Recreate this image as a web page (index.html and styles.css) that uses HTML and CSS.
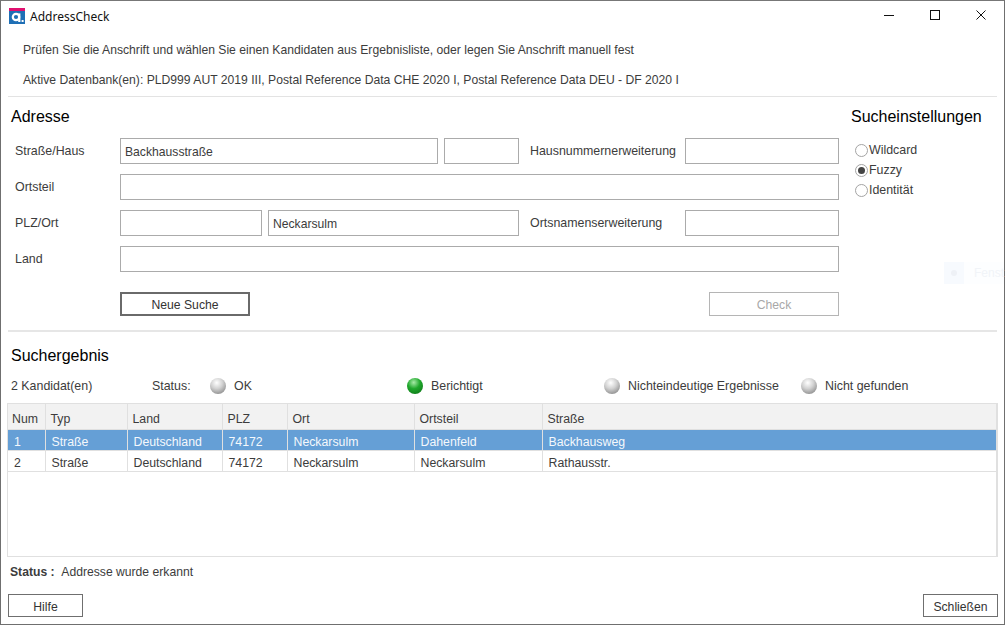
FILE: index.html
```html
<!DOCTYPE html>
<html lang="de">
<head>
  <meta charset="UTF-8">
  <title>AddressCheck</title>
  <link rel="stylesheet" href="styles.css">
</head>
<body>
  <div class="window">
    <header class="titlebar">
      <svg class="logo" width="16" height="16" viewBox="0 0 16 16">
        <rect width="16" height="16" fill="#1f6fb5"/>
        <rect width="16" height="3" fill="#e0106f"/>
        <circle cx="7" cy="9" r="3.2" fill="none" stroke="#fff" stroke-width="2.2"/>
        <rect x="9.2" y="5.4" width="2.2" height="8.6" fill="#fff"/>
        <rect x="12.6" y="12" width="2" height="2" fill="#fff"/>
      </svg>
      <span class="title">AddressCheck</span>
      <div class="window-controls">
        <svg width="10" height="10" viewBox="0 0 10 10"><path d="M0 5.5H10" stroke="#111" fill="none"/></svg>
        <svg width="10" height="10" viewBox="0 0 10 10"><rect x="0.5" y="0.5" width="9" height="9" stroke="#111" fill="none"/></svg>
        <svg width="10" height="10" viewBox="0 0 10 10"><path d="M0.5 0.5L9.5 9.5M9.5 0.5L0.5 9.5" stroke="#111" fill="none"/></svg>
      </div>
    </header>

    <div class="intro">
      <p>Prüfen Sie die Anschrift und wählen Sie einen Kandidaten aus Ergebnisliste, oder legen Sie Anschrift manuell fest</p>
      <p>Aktive Datenbank(en): PLD999 AUT 2019 III, Postal Reference Data CHE 2020 I, Postal Reference Data DEU - DF 2020 I</p>
    </div>

    <section class="search">
      <div class="address">
        <h2>Adresse</h2>
        <div class="form-grid">
          <label class="lbl">Straße/Haus</label>
          <div class="field span-street">Backhausstraße</div>
          <div class="field col-house"></div>
          <label class="lbl col-extlabel">Hausnummernerweiterung</label>
          <div class="field col-ext"></div>

          <label class="lbl">Ortsteil</label>
          <div class="field span-all"></div>

          <label class="lbl">PLZ/Ort</label>
          <div class="field"></div>
          <div class="field span-city">Neckarsulm</div>
          <label class="lbl col-extlabel">Ortsnamenserweiterung</label>
          <div class="field col-ext"></div>

          <label class="lbl">Land</label>
          <div class="field span-all"></div>
        </div>
        <div class="form-actions">
          <button class="btn btn-default">Neue Suche</button>
          <button class="btn btn-disabled" disabled>Check</button>
        </div>
      </div>
      <aside class="settings">
        <h2>Sucheinstellungen</h2>
        <div class="radio"><span class="radio-dot"></span>Wildcard</div>
        <div class="radio"><span class="radio-dot checked"></span>Fuzzy</div>
        <div class="radio"><span class="radio-dot"></span>Identität</div>
      </aside>
    </section>

    <section class="results">
      <h2>Suchergebnis</h2>
      <div class="status-row">
        <span class="count">2 Kandidat(en)</span>
        <span class="status-label">Status:</span>
        <span class="state state-ok"><i class="ball"></i>OK</span>
        <span class="state state-fixed"><i class="ball green"></i>Berichtigt</span>
        <span class="state state-ambig"><i class="ball"></i>Nichteindeutige Ergebnisse</span>
        <span class="state"><i class="ball"></i>Nicht gefunden</span>
      </div>
      <div class="table-box">
        <table>
          <colgroup>
            <col class="c-num"><col class="c-typ"><col class="c-land"><col class="c-plz"><col class="c-ort"><col class="c-teil"><col>
          </colgroup>
          <thead>
            <tr><th>Num</th><th>Typ</th><th>Land</th><th>PLZ</th><th>Ort</th><th>Ortsteil</th><th>Straße</th></tr>
          </thead>
          <tbody>
            <tr class="selected"><td>1</td><td>Straße</td><td>Deutschland</td><td>74172</td><td>Neckarsulm</td><td>Dahenfeld</td><td>Backhausweg</td></tr>
            <tr><td>2</td><td>Straße</td><td>Deutschland</td><td>74172</td><td>Neckarsulm</td><td>Neckarsulm</td><td>Rathausstr.</td></tr>
          </tbody>
        </table>
      </div>
      <p class="status-line"><b>Status :</b> Addresse wurde erkannt</p>
    </section>

    <footer class="actions">
      <button class="btn btn-help">Hilfe</button>
      <button class="btn btn-close">Schließen</button>
    </footer>

    <div class="ghost"><span class="ghost-icon"><i></i></span><span class="ghost-text">Fenst</span></div>
  </div>
</body>
</html>
```

FILE: styles.css
```css
* {
  box-sizing: border-box;
}

html, body {
  margin: 0;
  height: 100%;
  overflow: hidden;
}

body {
  font-family: "Liberation Sans", Arial, sans-serif;
  font-size: 12.16px;
  color: #3c3c3c;
  background: #fff;
}

.window {
  position: relative;
  width: 1005px;
  height: 625px;
  border: 1px solid #6f6f6f;
  border-top-color: #777;
  background: #fff;
  display: flex;
  flex-direction: column;
}

h2 {
  margin: 0;
  font-size: 16px;
  font-weight: normal;
  color: #000;
}

p {
  margin: 0;
}

.titlebar {
  height: 30px;
  flex: none;
  display: flex;
  align-items: center;
  padding-left: 8px;
}

.title {
  margin-left: 5px;
  font-family: "Noto Sans", sans-serif;
  font-size: 12px;
  color: #111;
}

.window-controls {
  margin-left: auto;
  margin-right: 18px;
  margin-bottom: 2px;
  display: flex;
  gap: 36px;
}

.intro {
  height: 66px;
  flex: none;
  margin: 0 7px;
  padding: 13px 0 0 15px;
  border-bottom: 1px solid #e3e3e3;
  display: flex;
  flex-direction: column;
  gap: 17px;
}

.intro p {
  line-height: 13px;
}

.search {
  height: 235px;
  flex: none;
  margin: 0 7px;
  border-bottom: 2px solid #e6e6e6;
  display: flex;
}

.address {
  width: 831px;
  padding-top: 10px;
}

.address h2 {
  padding-left: 3px;
  line-height: 20px;
}

.form-grid {
  margin-top: 11px;
  padding-left: 7px;
  display: grid;
  grid-template-columns: 105px 142px 6px 170px 6px 75px 11px 155px 154px;
  grid-auto-rows: 26px;
  row-gap: 10px;
  align-items: center;
}

.lbl {
  grid-column: 1;
  font-size: 12.4px;
}

.field {
  height: 26px;
  border: 1px solid #ababab;
  padding: 0 4px;
  line-height: 27px;
  grid-column: 2;
}

.span-street { grid-column: 2 / 5; }
.span-city { grid-column: 4 / 7; }
.span-all { grid-column: 2 / 10; }
.col-house { grid-column: 6; }
.col-extlabel { grid-column: 8; }
.col-ext { grid-column: 9; }

.form-actions {
  margin-top: 20px;
  margin-left: 112px;
  width: 719px;
  display: flex;
  justify-content: space-between;
}

.btn {
  font-family: inherit;
  font-size: 12.2px;
  color: #333;
  background: #fff;
  border: 1px solid #6f6f6f;
  padding: 2px 0 0;
}

.btn-default {
  width: 130px;
  height: 24px;
  border: 2px solid #6a6a6a;
}

.btn-disabled {
  width: 130px;
  height: 24px;
  border-color: #b5b5b5;
  color: #a8a8a8;
}

.settings {
  padding: 10px 0 0 12px;
}

.settings h2 {
  line-height: 20px;
  margin-bottom: 13px;
}

.radio {
  height: 20px;
  padding-left: 4px;
  display: flex;
  align-items: center;
  gap: 1px;
  font-size: 12.4px;
}

.radio-dot {
  width: 13px;
  height: 13px;
  border-radius: 50%;
  border: 1px solid #a4a4a4;
  background: #fff;
  display: flex;
  align-items: center;
  justify-content: center;
}

.radio-dot.checked::after {
  content: "";
  width: 7px;
  height: 7px;
  border-radius: 50%;
  background: #444;
}

.results {
  flex: 1;
  margin: 0 7px;
  min-height: 0;
}

.results h2 {
  padding: 14px 0 0 3px;
  line-height: 20px;
}

.status-row {
  height: 37px;
  padding: 3px 0 0 3px;
  display: flex;
  align-items: center;
  font-size: 12.4px;
}

.count {
  width: 141px;
}

.status-label {
  width: 58px;
}

.state {
  display: flex;
  align-items: center;
  gap: 8px;
}

.state-ok { width: 197px; }
.state-fixed { width: 197px; }
.state-ambig { width: 197px; }

.ball {
  width: 16px;
  height: 16px;
  border-radius: 50%;
  background: radial-gradient(circle at 42% 30%, #fff 0%, #d2d2d2 40%, #8a8a8a 85%, #777 100%);
}

.ball.green {
  background: radial-gradient(circle at 42% 28%, #a6eaa6 0%, #1fa82c 42%, #0a6a14 100%);
}

.table-box {
  height: 154px;
  margin: 0 -1px 0 -1px;
  border: 1px solid #e0e0e0;
  border-right-width: 2px;
  font-size: 12.3px;
}

table {
  width: 100%;
  table-layout: fixed;
  border-collapse: collapse;
}

.c-num { width: 37px; }
.c-typ { width: 82px; }
.c-land { width: 95px; }
.c-plz { width: 65px; }
.c-ort { width: 127px; }
.c-teil { width: 128px; }

th {
  height: 25px;
  padding: 5px 0 0 5px;
  text-align: left;
  font-weight: normal;
  background: #f2f2f2;
  border-right: 1px solid #e0e0e0;
  border-bottom: 1px solid #e0e0e0;
}

th:first-child {
  padding-left: 4px;
}

td {
  height: 21px;
  padding: 4px 0 0 6px;
  border-right: 1px solid #e0e0e0;
  border-bottom: 1px solid #e0e0e0;
}

th:last-child, td:last-child {
  border-right: none;
}

.selected td {
  background: #659fd6;
  color: #f4f8fc;
}

.status-line {
  padding: 8px 0 0 2px;
  line-height: 15px;
}

.status-line b {
  margin-right: 4px;
}

.actions {
  flex: none;
  margin: 0 6px 7px 7px;
  display: flex;
  justify-content: space-between;
}

.btn-help {
  width: 75px;
  height: 23px;
}

.btn-close {
  width: 75px;
  height: 23px;
}

.ghost {
  position: absolute;
  left: 943px;
  top: 261px;
  width: 60px;
  height: 22px;
  display: flex;
  align-items: center;
  background: #fdfeff;
  color: #f1f4f8;
  font-size: 12px;
}

.ghost-icon {
  width: 22px;
  height: 22px;
  display: flex;
  align-items: center;
  justify-content: center;
  background: #f7fafe;
  margin-right: 10px;
}

.ghost-icon i {
  width: 6px;
  height: 6px;
  border-radius: 50%;
  background: #eef1f6;
}
```
